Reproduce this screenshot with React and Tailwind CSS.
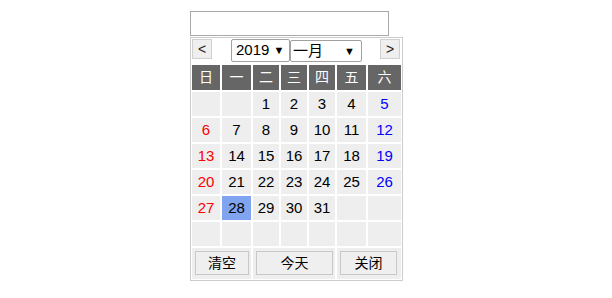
import React from 'react';

const font = { fontFamily: '"Liberation Sans", "Noto Sans CJK SC", sans-serif' };

const weekdays = ['日', '一', '二', '三', '四', '五', '六'];

const days = [
  null, null, 1, 2, 3, 4, 5,
  6, 7, 8, 9, 10, 11, 12,
  13, 14, 15, 16, 17, 18, 19,
  20, 21, 22, 23, 24, 25, 26,
  27, 28, 29, 30, 31, null, null,
  null, null, null, null, null, null, null,
];

const SelectBox = ({ className, children }) => (
  <div
    className={
      'flex items-center border border-[#a0a0a0] rounded-[2px] bg-white text-[15px] text-black ' +
      className
    }
  >
    {children}
  </div>
);

export default function App() {
  return (
    <div className="min-h-[298px] bg-white pl-[190px] pt-[11px]" style={font}>
      {/* date input */}
      <div className="w-[199px] h-[25px] border border-[#a9a9a9] bg-white" />

      {/* calendar popup */}
      <div className="mt-[1px] w-[213px] border border-[#cccccc] bg-white p-[1px]">
        {/* nav */}
        <div className="flex items-start h-[24px] mb-[2px]">
          <button className="w-[20px] h-[20px] flex items-center justify-center border border-[#d0d0d0] bg-[#efefef] text-[14px] text-[#222] leading-none">
            &lt;
          </button>
          <SelectBox className="ml-[19px] w-[59px] h-[23px] pl-[4px]">
            <span>2019</span>
            <span className="ml-[4px] text-[11px]">▼</span>
          </SelectBox>
          <SelectBox className="mt-[1px] w-[72px] h-[22px] pl-[2px] pr-[6px] justify-between">
            <span>一月</span>
            <span className="text-[11px]">▼</span>
          </SelectBox>
          <button className="ml-auto mr-[1px] w-[20px] h-[20px] flex items-center justify-center border border-[#d0d0d0] bg-[#efefef] text-[14px] text-[#222] leading-none">
            &gt;
          </button>
        </div>

        {/* grid */}
        <div className="grid grid-cols-[28px_29px_26px_26px_26px_29px_33px] gap-[2px] text-[15px]">
          {weekdays.map((w) => (
            <div key={w} className="h-[25px] bg-[#666666] text-white text-[14px] flex items-center justify-center">
              {w}
            </div>
          ))}
          {days.map((d, i) => {
            const col = i % 7;
            let color = 'text-black';
            if (col === 0) color = 'text-[#ff0000]';
            if (col === 6) color = 'text-[#0000ff]';
            const today = d === 28;
            return (
              <div
                key={i}
                className={
                  'h-[24px] flex items-center justify-center ' +
                  color +
                  (today ? ' bg-[#80a4ef]' : ' bg-[#eeeeee]')
                }
              >
                {d}
              </div>
            );
          })}

          {/* footer */}
          <div className="col-span-2 h-[31px] bg-[#eeeeee] pl-[3px] pr-[2px] pt-[3px] pb-[4px]">
            <button className="w-full h-full border border-[#c8c8c8] bg-[#efefef] text-[14px] text-black">清空</button>
          </div>
          <div className="col-span-3 h-[31px] bg-[#eeeeee] pl-[3px] pr-[2px] pt-[3px] pb-[4px]">
            <button className="w-full h-full border border-[#c8c8c8] bg-[#efefef] text-[14px] text-black">今天</button>
          </div>
          <div className="col-span-2 h-[31px] bg-[#eeeeee] pl-[3px] pr-[4px] pt-[3px] pb-[4px]">
            <button className="w-full h-full border border-[#c8c8c8] bg-[#efefef] text-[14px] text-black">关闭</button>
          </div>
        </div>
      </div>
    </div>
  );
}
